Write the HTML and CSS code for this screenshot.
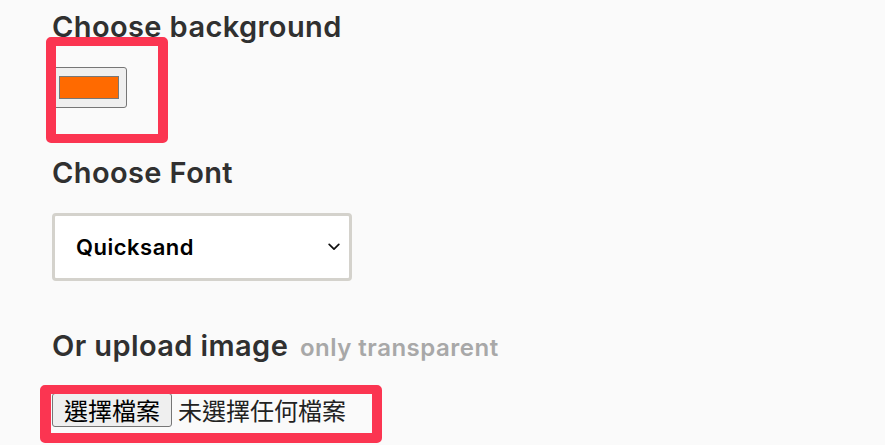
FILE: index.html
```html
<!DOCTYPE html>
<html lang="zh-Hant">
<head>
<meta charset="utf-8">
<title>Settings</title>
<link rel="stylesheet" href="styles.css">
</head>
<body>
<main class="page">
  <h2 class="title">Choose background</h2>
  <div class="field field-color">
    <input class="color-input" type="color" value="#ff6a00" aria-label="Background colour">
    <span class="mark mark-color"></span>
  </div>

  <h2 class="title title-gap">Choose Font</h2>
  <div class="select" role="combobox" aria-expanded="false">
    <span class="select-value">Quicksand</span>
    <svg class="chevron" width="12" height="8" viewBox="0 0 12 8" aria-hidden="true">
      <path d="M1.2 1.4 L6 6.2 L10.8 1.4" fill="none" stroke="#111" stroke-width="1.7" stroke-linecap="round" stroke-linejoin="round"/>
    </svg>
  </div>

  <h2 class="title title-gap">Or upload image <span class="hint">only transparent</span></h2>
  <div class="field field-file">
    <div class="file">
      <button class="file-btn" type="button">選擇檔案</button>
      <span class="file-name">未選擇任何檔案</span>
    </div>
    <span class="mark mark-file"></span>
  </div>
</main>
</body>
</html>
```

FILE: styles.css
```css
html, body {
  margin: 0;
  padding: 0;
  background: #fafafa;
}

body {
  min-height: 100vh;
}

.page {
  padding: 7px 0 0 52px;
  font-family: "Inter", "Noto Sans", sans-serif;
  color: #303030;
}

.title {
  margin: 0;
  padding-top: 2px;
  font-size: 29px;
  line-height: 36px;
  font-weight: 600;
  letter-spacing: 0.4px;
}

.title-gap {
  margin-top: 45px;
}

.hint {
  font-size: 24px;
  line-height: 1;
  color: #a8a8a8;
  font-weight: 600;
  letter-spacing: 0.5px;
  margin-left: 4px;
}

.field {
  position: relative;
  display: inline-block;
}

.field-color {
  margin-top: 22px;
  display: block;
  width: 75px;
}

.color-input {
  -webkit-appearance: none;
  appearance: none;
  display: block;
  width: 75px;
  height: 41px;
  margin: 0;
  padding: 0;
  border: 1px solid #767676;
  border-radius: 3px;
  background: #efefef;
  box-sizing: border-box;
}

.color-input::-webkit-color-swatch-wrapper {
  padding: 8px 7px 8px 6px;
}

.color-input::-webkit-color-swatch {
  border: 1px solid #777777;
  border-radius: 0;
}

.mark {
  position: absolute;
  border-style: solid;
  border-color: #fb3551;
  border-radius: 5px;
  box-sizing: border-box;
  pointer-events: none;
}

.mark-color {
  left: -6px;
  top: -30px;
  width: 122px;
  height: 106px;
  border-width: 9px 10px 9px 10px;
}

.select {
  margin-top: 22px;
  width: 300px;
  height: 68px;
  box-sizing: border-box;
  border: 3px solid #d4d2cc;
  border-radius: 4px;
  background: #ffffff;
  display: flex;
  align-items: center;
  justify-content: space-between;
  padding: 0 9px 0 21px;
  color: #000000;
}

.select-value {
  font-size: 22px;
  font-weight: 600;
  letter-spacing: 0.5px;
}

.chevron {
  display: block;
}

.field-file {
  margin-top: 29px;
  display: block;
  width: max-content;
}

.file {
  display: flex;
  align-items: center;
  gap: 6px;
  font-family: "Noto Sans CJK TC", "Noto Sans CJK SC", sans-serif;
  font-size: 24px;
}

.file-btn {
  font: inherit;
  font-size: 24px;
  line-height: 30px;
  height: 34px;
  padding: 0 11px;
  margin: 0;
  border: 1px solid #767676;
  border-radius: 3px;
  background: #efefef;
  color: #000000;
}

.file-name {
  color: #222222;
  line-height: 30px;
}

.mark-file {
  left: -12px;
  top: -8px;
  width: 342px;
  height: 58px;
  border-width: 9px 10px 10px 11px;
}
```
